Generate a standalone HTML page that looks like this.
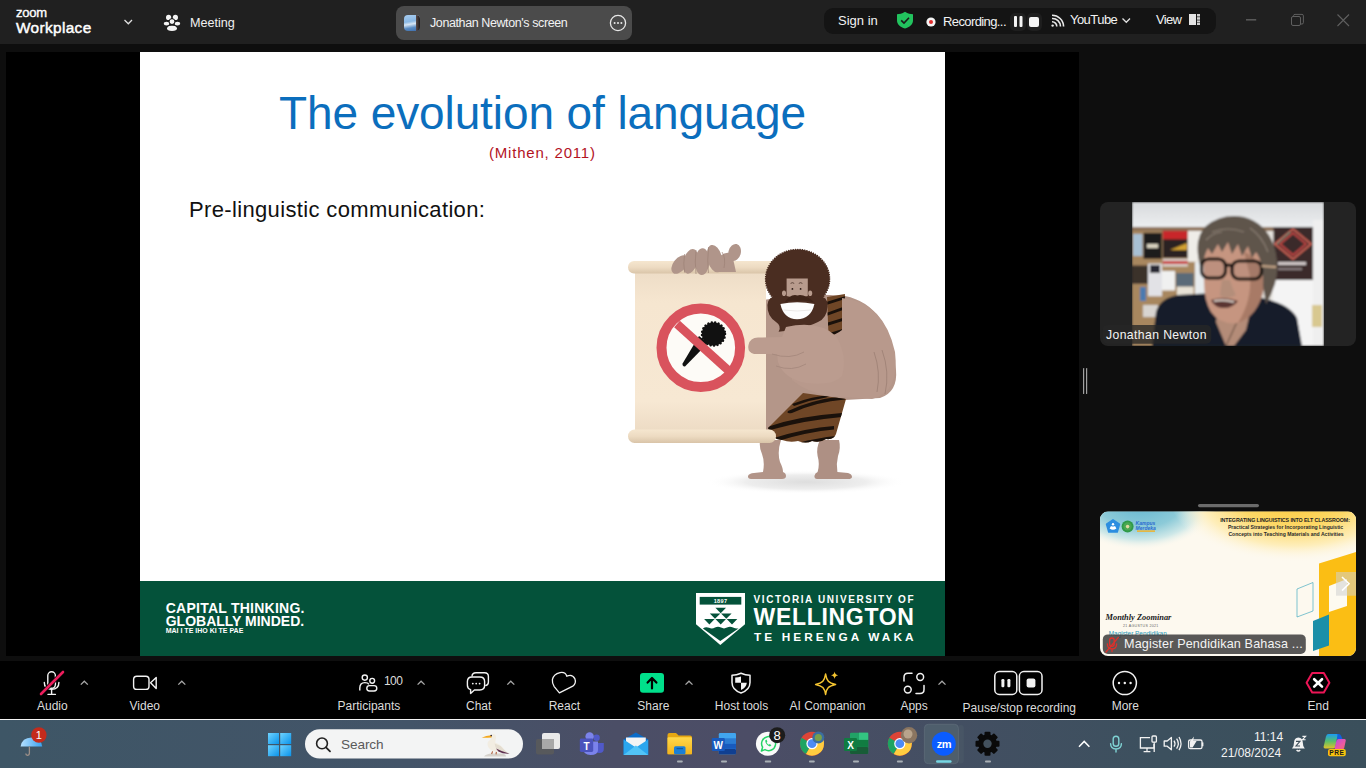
<!DOCTYPE html>
<html><head><meta charset="utf-8">
<style>
*{margin:0;padding:0;box-sizing:border-box}
html,body{width:1366px;height:768px;overflow:hidden;background:#0e0e0e;font-family:"Liberation Sans",sans-serif;color:#fff}
.a{position:absolute}
.t{position:absolute;white-space:nowrap;line-height:1}
svg{position:absolute;overflow:visible}
#title{left:0;top:0;width:1366px;height:44px;background:#202020}
#video{left:6px;top:52px;width:1073px;height:604px;background:#000}
#slide{left:140px;top:52px;width:805px;height:604px;background:#fff;overflow:hidden}
#toolbar{left:0;top:661px;width:1366px;height:58px;background:#000}
#taskbar{left:0;top:719px;width:1366px;height:49px;background:linear-gradient(90deg,#3e5666 0%,#435468 30%,#4b4e66 45%,#4c4d66 55%,#434f62 70%,#3c505e 85%,#3a4f5b 100%);border-top:1px solid #f4f4f4}
.lbl{font-size:12px;color:#dcdcdc}
.chev{stroke:#a8a8a8;stroke-width:1.3;fill:none}
</style></head><body>
<!-- TITLE BAR -->
<div id="title" class="a">
  <div class="t" style="left:16px;top:6px;font-size:13px;letter-spacing:-0.2px;-webkit-text-stroke:0.35px #fff">zoom</div>
  <div class="t" style="left:16px;top:20px;font-size:15.4px;letter-spacing:0.35px;-webkit-text-stroke:0.45px #fff">Workplace</div>
  <svg style="left:0;top:0" width="1366" height="44">
    <path d="M124.5 20 L128.3 23.8 L132 20" stroke="#e0e0e0" stroke-width="1.3" fill="none"/>
    <!-- meeting icon -->
    <g fill="#f4f4f4">
      <circle cx="168.6" cy="17.4" r="2.6"/><circle cx="175.4" cy="17.4" r="2.6"/>
      <circle cx="172" cy="21.6" r="2.5"/>
      <ellipse cx="166.6" cy="23.6" rx="2.8" ry="1.9"/><ellipse cx="177.4" cy="23.6" rx="2.8" ry="1.9"/>
      <ellipse cx="172" cy="28.2" rx="5" ry="2.7"/>
    </g>
    <g stroke="#202020" stroke-width="1" fill="none">
      <circle cx="172" cy="21.6" r="3"/>
      <path d="M166.5 28.2 a5.5 3.2 0 0 1 11 0"/>
    </g>
  </svg>
  <div class="t" style="left:190px;top:17px;font-size:12.6px;color:#f0f0f0">Meeting</div>
  <!-- share pill -->
  <div class="a" style="left:396px;top:6px;width:236px;height:34px;border-radius:8px;background:#4b4b4b"></div>
  <div class="a" style="left:404px;top:15px;width:16px;height:16px;border-radius:4px;background:linear-gradient(170deg,#a8cdf0 0%,#8ab8e4 40%,#d8e6f4 55%,#5a8cc4 75%,#3a6aa8 100%)"></div>
  <div class="a" style="left:416px;top:15px;width:4px;height:16px;border-radius:0 4px 4px 0;background:linear-gradient(90deg,#5a4a48,#1e1a1a)"></div>
  <div class="t" style="left:430px;top:17px;font-size:12.5px;letter-spacing:-0.4px;color:#f2f2f2">Jonathan Newton's screen</div>
  <svg style="left:0;top:0" width="1366" height="44">
    <circle cx="618" cy="23" r="7.6" stroke="#e8e8e8" stroke-width="1.3" fill="none"/>
    <circle cx="614.6" cy="23" r="1" fill="#e8e8e8"/><circle cx="618" cy="23" r="1" fill="#e8e8e8"/><circle cx="621.4" cy="23" r="1" fill="#e8e8e8"/>
  </svg>
  <!-- right pill -->
  <div class="a" style="left:824px;top:8px;width:392px;height:26px;border-radius:9px;background:#141414"></div>
  <div class="t" style="left:838px;top:14px;font-size:13px;color:#f2f2f2">Sign in</div>
  <svg style="left:0;top:0" width="1366" height="44">
    <path d="M905 11.8 C908 13.6 910.5 14.2 913 14.2 L913 20.5 C913 24.5 909.5 27.3 905 28.6 C900.5 27.3 897 24.5 897 20.5 L897 14.2 C899.5 14.2 902 13.6 905 11.8Z" fill="#22c35e"/>
    <path d="M901.2 20.3 L904 23 L909 17.8" stroke="#1a1a1a" stroke-width="1.6" fill="none"/>
    <circle cx="931" cy="22" r="4.6" fill="#f4f4f4"/><circle cx="931" cy="22" r="2" fill="#e02b2b"/>
    <rect x="1010" y="13" width="16" height="18" rx="5" fill="#1e1e1e"/>
    <rect x="1027" y="13" width="15" height="18" rx="5" fill="#1e1e1e"/>
    <rect x="1014" y="16" width="3" height="11" rx="1" fill="#f4f4f4"/><rect x="1019.5" y="16" width="3" height="11" rx="1" fill="#f4f4f4"/>
    <rect x="1029" y="17" width="10" height="10" rx="2" fill="#f4f4f4"/>
    <!-- rss -->
    <g fill="none" stroke="#e8e8e8" stroke-width="1.6">
      <path d="M1052 18.5 A8 8 0 0 1 1060.5 26.5"/>
      <path d="M1052 15.2 A11.5 11.5 0 0 1 1063.6 26.5"/>
      <path d="M1052 21.8 A4.6 4.6 0 0 1 1056.8 26.5"/>
    </g>
    <circle cx="1052.6" cy="25.6" r="1.2" fill="#e8e8e8"/>
    <path d="M1122.5 18.5 L1126.3 22.3 L1130 18.5" stroke="#e0e0e0" stroke-width="1.3" fill="none"/>
    <!-- view icon -->
    <rect x="1189" y="14" width="7" height="11" fill="#e4e4e4"/>
    <g fill="#cfcfcf"><rect x="1197" y="14" width="3" height="2.5"/><rect x="1197" y="17.2" width="3" height="2.5"/><rect x="1197" y="20.4" width="3" height="2.1"/><rect x="1197" y="23" width="3" height="2"/></g>
    <!-- window controls -->
    <path d="M1246 19.8 H1256.2" stroke="#5c5c5c" stroke-width="1.5"/>
    <rect x="1291.5" y="16.5" width="9" height="9" rx="1.5" stroke="#5f5f5f" stroke-width="1" fill="none"/>
    <path d="M1293.6 16.5 V15.6 Q1293.6 14.4 1295 14.4 H1302 Q1303.4 14.4 1303.4 15.8 V22.6 Q1303.4 24 1302 24 H1300.6" stroke="#5f5f5f" stroke-width="1" fill="none"/>
    <path d="M1337.5 14.5 L1349 26 M1349 14.5 L1337.5 26" stroke="#5f5f5f" stroke-width="1.1"/>
  </svg>
  <div class="t" style="left:943px;top:15px;font-size:13px;letter-spacing:-0.6px;color:#f2f2f2">Recording...</div>
  <div class="t" style="left:1070px;top:13px;font-size:13px;letter-spacing:-0.55px;color:#f2f2f2">YouTube</div>
  <div class="t" style="left:1156px;top:13px;font-size:13px;letter-spacing:-0.7px;color:#f2f2f2">View</div>
</div>

<div id="video" class="a"></div>
<div id="slide" class="a">
  <div class="t" id="ttl" style="left:139px;top:38px;font-size:46px;letter-spacing:-0.1px;color:#0b6ebd">The evolution of language</div>
  <div class="t" style="left:349px;top:92.5px;font-size:15px;letter-spacing:0.8px;color:#b3141f">(Mithen, 2011)</div>
  <div class="t" style="left:49px;top:147px;font-size:22px;letter-spacing:0.35px;color:#111">Pre-linguistic communication:</div>
<svg style="left:-140px;top:-52px" width="1366" height="768">
    <defs>
      <radialGradient id="shadow" cx="0.5" cy="0.5" r="0.5"><stop offset="0" stop-color="#cfcfcf"/><stop offset="0.6" stop-color="#e6e6e6"/><stop offset="1" stop-color="#ffffff" stop-opacity="0"/></radialGradient>
      <linearGradient id="scroll" x1="0" y1="0" x2="0" y2="1"><stop offset="0" stop-color="#eddcc6"/><stop offset="0.2" stop-color="#f6e6d0"/><stop offset="0.8" stop-color="#f7e8d3"/><stop offset="1" stop-color="#ecdac3"/></linearGradient>
      <linearGradient id="roll" x1="0" y1="0" x2="0" y2="1"><stop offset="0" stop-color="#f5e6cf"/><stop offset="0.5" stop-color="#eddbc2"/><stop offset="1" stop-color="#d9c4a8"/></linearGradient>
      <linearGradient id="skin" x1="0" y1="0" x2="1" y2="1"><stop offset="0" stop-color="#bfa194"/><stop offset="1" stop-color="#ad8f83"/></linearGradient>
      <pattern id="tiger" width="14" height="14" patternUnits="userSpaceOnUse" patternTransform="rotate(-18)">
        <rect width="14" height="14" fill="#6e4527"/><rect y="4" width="14" height="3.2" fill="#1c120c"/>
      </pattern>
    </defs>
    <!-- shadow -->
    <ellipse cx="806" cy="482" rx="100" ry="12" fill="url(#shadow)" opacity="0.7"/>
    <!-- legs -->
    <path d="M760 440 L781 440 Q777 452 780 462 Q783 468 783 472 Q786 473 786 476 Q786 479 782 479 L751 479 Q747.6 479 748 476 Q749 473.4 754 473 L763 472 Q765 462 762 454 Q759 448 760 440Z" fill="#b29488"/>
    <path d="M820 440 L839 440 Q841 448 838 456 Q836 464 837.4 472 L848 473 Q852 474 852 477 Q851.6 479 848 479 L817 479 Q814.4 479 814.4 476 Q815 473 817.6 472 Q820 464 817.6 456 Q816 448 820 440Z" fill="#ae9084"/>
    <!-- torso -->
    <path d="M764 300 Q800 292 845 296 Q890 305 896 370 Q898 392 880 398 L845 400 L803 394 L790 430 L764 432Z" fill="#b49689"/>
    <!-- loincloth -->
    <clipPath id="lc"><path d="M768 428 L803 393 L846 399 L836 434 Q834 440 826 439 Q820 443 812 441 Q806 444 798 441 Q790 443 782 440 Q772 440 768 428Z"/></clipPath>
    <path d="M768 428 L803 393 L846 399 L836 434 Q834 440 826 439 Q820 443 812 441 Q806 444 798 441 Q790 443 782 440 Q772 440 768 428Z" fill="#6f4626"/>
    <g clip-path="url(#lc)" fill="#1a110b">
      <path d="M788 411 Q812 400 840 396.6 L846 396 L845 399.6 Q816 402 792 413 Q786 414 788 411Z"/>
      <path d="M792 404 Q812 396 832 395 L826 397.6 Q810 400 794 406Z"/>
      <path d="M766 427.4 Q798 416 842 413 L842 417 Q806 420 770 430Z"/>
      <path d="M774 438 Q806 428 834 426 L834 429.6 Q808 432 778 441Z"/>
      <path d="M794 444 Q816 438 836 436 L836 440 Q818 442 798 446Z"/>
    </g>
    <!-- strap -->
    <clipPath id="st"><path d="M827 297 L845 294 L843 346 L829 348Z"/></clipPath>
    <path d="M827 297 L845 294 L843 346 L829 348Z" fill="#6f4626"/>
    <g clip-path="url(#st)" fill="#1a110b">
      <path d="M826 302 L846 296 L846 298.6 L826 305Z"/>
      <path d="M826 313 L846 306 L846 309 L826 316Z"/>
      <path d="M826 323 L846 317 L846 320 L826 326.4Z"/>
      <path d="M826 334 L846 328 L846 331 L826 337Z"/>
      <path d="M826 344 L846 338 L846 341 L826 347Z"/>
    </g>
    <!-- scroll -->
    <rect x="635" y="270" width="131" height="164" fill="url(#scroll)"/>
    <rect x="628" y="261" width="148" height="12.6" rx="6" fill="url(#roll)"/>
    <rect x="628" y="429.5" width="148" height="13.5" rx="6.5" fill="url(#roll)"/>
    <!-- afro -->
    <ellipse cx="797.6" cy="279" rx="32" ry="29.5" fill="#4a2d21" stroke="#4a2d21" stroke-width="1.6" stroke-dasharray="0.1 2.2" stroke-linecap="round"/>
    <!-- beard -->
    <path d="M767.4 305 Q768 296 778 296 L818 296 Q828 296 827.6 306 Q827 318 818 322 Q808 327 796 329 Q786 331 778.6 331.8 Q782 326 776 322 Q767 316 767.4 305Z" fill="#4a2d21"/>
    <!-- face -->
    <path d="M786.6 278.4 H807.8 V296 Q797 299 786.6 296Z" fill="#b89b8d"/>
    <ellipse cx="784" cy="293.2" rx="2" ry="2.8" fill="#b89b8d"/><ellipse cx="810.2" cy="293.2" rx="2" ry="2.8" fill="#b89b8d"/>
    <path d="M790.6 283.4 q1.8 -1.4 3.6 0 M798.8 283.4 q1.8 -1.4 3.6 0" stroke="#3a241b" stroke-width="0.7" fill="none"/>
    <circle cx="792.4" cy="288.9" r="0.9" fill="#2a1a14"/><circle cx="800.6" cy="288.9" r="0.9" fill="#2a1a14"/>
    <path d="M784.6 302.6 Q790 293.6 797.4 295.4 Q805 293.6 814.4 302.6 Q805 299.6 797.4 301 Q790 299.6 784.6 302.6Z" fill="#3e2419"/>
    <!-- smile -->
    <path d="M780.4 304 Q797 300.4 814.4 304 Q811 319.2 797 319.2 Q783.6 319.2 780.4 304Z" fill="#fdfdfd"/>
    <path d="M783.6 310 Q797 312 811 310" stroke="#d8d4d0" stroke-width="0.5" fill="none"/>
    <!-- hand on top -->
    <g fill="#b0958a">
      <path d="M718 258 Q726 250 732 254 L736 272 L716 272Z"/>
      <ellipse cx="734.6" cy="252.4" rx="6.2" ry="8.6" transform="rotate(14 734.6 252.4)"/>
      <ellipse cx="679.6" cy="264.6" rx="6.4" ry="10.6" transform="rotate(38 679.6 264.6)"/>
      <ellipse cx="690.4" cy="261.4" rx="7" ry="12.6" transform="rotate(16 690.4 261.4)"/>
      <ellipse cx="702.2" cy="261.6" rx="7.2" ry="13.4" transform="rotate(2 702.2 261.6)"/>
      <ellipse cx="714.8" cy="258.6" rx="7.4" ry="14" transform="rotate(-14 714.8 258.6)"/>
    </g>
    <g fill="none" stroke="#9c8176" stroke-width="0.7">
      <path d="M684.6 254 Q683 264 684.6 272.6"/><path d="M696 250 Q694.6 262 696 274"/><path d="M708.6 247 Q707 260 708.4 273"/><path d="M722 252 Q726 258 724 268"/>
    </g>
    <!-- prohibition -->
    <circle cx="700.8" cy="347.8" r="39.3" stroke="#d9535d" stroke-width="10" fill="#fdfbf7"/>
    <path d="M682.6 363.6 Q682 366.6 685 366.4 L708 343 L699 336 Z" fill="#111"/>
    <circle cx="713.5" cy="334" r="11.6" fill="#111" stroke="#111" stroke-width="2.4" stroke-dasharray="0.1 3.4" stroke-linecap="round"/>
    <path d="M677 324 L729 371" stroke="#d9535d" stroke-width="8.5"/>
    <!-- arm / forearm -->
    <path d="M842 298 Q884 302 895 352 Q900 392 872 399 L830 396 Q806 392 792 380 L790 345 Q830 340 842 330 Z" fill="#b8998c"/>
    <path d="M874 352 Q881 372 877 392 M882 350 Q890 372 885 394" stroke="#9c7f74" stroke-width="0.8" fill="none"/>
    <!-- fist -->
    <path d="M786 327 Q818 320 836 336 Q848 356 842 376 Q834 386 806 383 Q784 379 778 362 L777 354 L754 354 Q747 352 748.5 345 Q750 337.5 758 337.5 L782 337Z" fill="#bb9c8f"/>
    <path d="M772 354 Q790 360 804 352 M776 366 Q792 372 806 364" stroke="#a3867b" stroke-width="0.8" fill="none"/>
    
  </svg>
  <div class="a" style="left:0;top:529px;width:805px;height:75px;background:#04523a"></div>
  <div class="t" style="left:25.7px;top:549px;font-size:14px;font-weight:bold;letter-spacing:0.25px;color:#fff">CAPITAL THINKING.</div>
  <div class="t" style="left:25.7px;top:561.5px;font-size:14px;font-weight:bold;color:#fff">GLOBALLY MINDED.</div>
  <div class="t" style="left:25.7px;top:575px;font-size:7px;font-weight:bold;color:#fff">MAI I TE IHO KI TE PAE</div>
  <svg style="left:-140px;top:-52px" width="1366" height="768">
    <path d="M696 593 H745 V624.3 L720.3 645 L696 624.3Z" fill="#fff"/>
    <rect x="699.7" y="596.9" width="41.6" height="7.7" fill="#04523a"/>
    <text x="720.5" y="603" font-family="Liberation Sans" font-size="5.6" font-weight="bold" fill="#fff" text-anchor="middle" letter-spacing="0.3">1897</text>
    <g fill="#04523a">
      <path d="M715.4 607.8 H726 L720.7 613.2Z"/>
      <path d="M709.8 613.4 H720.4 L715 618.8Z M721 613.4 H731.6 L726.3 618.8Z"/>
      <path d="M704.1 619 H714.7 L709.4 624.4Z M715.4 619 H726 L720.7 624.4Z M726.7 619 H737.3 L732 624.4Z"/>
      <path d="M702.9 628.4 Q706 626.2 709 627.8 Q712 629.2 715 627.6 Q718 626 721 627.6 Q724 629.2 727 627.6 Q730 626 733 627.6 Q736 629 738.5 628.4 L720.3 641Z"/>
    </g>
  </svg>
  <div class="t" style="left:613.5px;top:542.5px;font-size:10px;font-weight:bold;letter-spacing:1.6px;color:#fff">VICTORIA UNIVERSITY OF</div>
  <div class="t" style="left:613.5px;top:554px;font-size:23px;font-weight:bold;letter-spacing:0.7px;color:#fff">WELLINGTON</div>
  <div class="t" style="left:614px;top:579.5px;font-size:11.8px;font-weight:bold;letter-spacing:3.1px;color:#fff">TE HERENGA WAKA</div>
</div>

<!-- RIGHT PANEL -->
<svg style="left:0;top:0" width="1366" height="768">
  <defs>
    <clipPath id="clipv"><rect x="1132" y="202" width="192" height="144"/></clipPath>
    <clipPath id="clipt2"><rect x="1100" y="511.6" width="256" height="144.4" rx="8"/></clipPath>
    <filter id="soft" x="-5%" y="-5%" width="110%" height="110%"><feGaussianBlur stdDeviation="0.9"/></filter>
    <radialGradient id="bblob" cx="0.5" cy="0.5" r="0.5"><stop offset="0" stop-color="#5fb4cf"/><stop offset="0.55" stop-color="#8ccad8"/><stop offset="0.8" stop-color="#cfe8e8"/><stop offset="1" stop-color="#fdf9ef" stop-opacity="0"/></radialGradient>
    <radialGradient id="yblob" cx="0.5" cy="0.5" r="0.5"><stop offset="0" stop-color="#fcc93a"/><stop offset="0.45" stop-color="#fdd867"/><stop offset="0.75" stop-color="#feeebb"/><stop offset="1" stop-color="#fdf9ef" stop-opacity="0"/></radialGradient>
    <linearGradient id="ceil" x1="0" y1="0" x2="0" y2="1"><stop offset="0" stop-color="#d8dadc"/><stop offset="1" stop-color="#eceef0"/></linearGradient>
  </defs>
  <!-- resize handle -->
  <rect x="1083" y="368" width="1.2" height="26" rx="0.6" fill="#a0a0a0"/>
  <rect x="1086" y="368" width="1.2" height="26" rx="0.6" fill="#a0a0a0"/>
  <!-- tile 1 -->
  <rect x="1100" y="202" width="256" height="144" rx="8" fill="#232323"/>
  <g clip-path="url(#clipv)"><g filter="url(#soft)">
    <rect x="1132" y="202" width="192" height="144" fill="#e6e3de"/>
    <rect x="1132" y="202" width="192" height="26" fill="url(#ceil)"/>
    <rect x="1132" y="231" width="30" height="31" fill="#ebe8e2"/>
    <rect x="1132" y="227" width="186" height="4" fill="#8e7258"/>
    <rect x="1132" y="231" width="66" height="115" fill="#a8875f"/>
    <rect x="1133" y="234" width="9.5" height="22" fill="#a8c0d4"/>
    <rect x="1143.5" y="232.8" width="18.3" height="26" fill="#1c1c1c"/>
    <rect x="1147" y="244" width="11" height="4" fill="#d8d2c0"/>
    <rect x="1162.8" y="230.8" width="25" height="27" fill="#2a2420"/>
    <rect x="1162.8" y="230.8" width="25" height="8.5" fill="#c8282a"/>
    <path d="M1170 250 L1187 243 L1187 250Z" fill="#d2a030"/>
    <rect x="1162.8" y="258.8" width="25" height="7.7" fill="#d9d0cc"/>
    <rect x="1162.8" y="261" width="25" height="3" fill="#c83030"/>
    <rect x="1187.8" y="230.8" width="19" height="31" fill="#efede8"/>
    <rect x="1132" y="265.5" width="16" height="18.3" fill="#3a302c"/>
    <rect x="1148" y="263.6" width="14" height="32.7" fill="#e2e2e6"/>
    <rect x="1150" y="265" width="10" height="8" fill="#2c2c34"/>
    <rect x="1162" y="271" width="13" height="19.5" fill="#f0f0f0"/>
    <rect x="1176" y="273" width="17.6" height="13.7" fill="#5a6a78"/>
    <rect x="1177" y="286.7" width="16.6" height="9.6" fill="#e8e2d6"/>
    <rect x="1140" y="287" width="6" height="14" fill="#4c7ab0"/>
    <rect x="1143" y="305" width="15" height="12" fill="#d8d4d0"/>
    <rect x="1195" y="262" width="10" height="34" fill="#e8ecee"/>
    <rect x="1273.5" y="227" width="39.5" height="53" fill="#3b2b2c"/>
    <path d="M1293 229 L1311 244 L1293 259 L1275 244Z" fill="none" stroke="#e06a5a" stroke-width="1.6"/>
    <path d="M1293 233 L1306 244 L1293 255 L1280 244Z" fill="none" stroke="#d84c48" stroke-width="1.4"/>
    <path d="M1277 244 L1290 232" stroke="#3ca890" stroke-width="1"/>
    <rect x="1278" y="262" width="28" height="3" fill="#d0c8c8"/>
    <rect x="1278" y="268" width="24" height="2" fill="#8a7f80"/>
    <rect x="1313" y="220" width="11" height="126" fill="#efefef"/>
    <rect x="1272.6" y="280" width="40.4" height="66" fill="#f4f4f4"/>
    <rect x="1312" y="305" width="10" height="22" fill="#d8c890"/>
    <!-- man -->
    <path d="M1152 346 L1156 312 Q1160 298 1178 295 L1214 293 L1262 298 Q1290 304 1297 318 L1302 346Z" fill="#171c29"/>
    <path d="M1218 306 L1252 304 L1246 330 L1234 346 L1226 346 L1216 322Z" fill="#b48c78"/>
    <path d="M1226 346 L1236 324 L1250 310" stroke="#3a2a20" stroke-width="0.8" fill="none"/>
    <path d="M1203 244 Q1206 236 1230 236 Q1258 238 1262 256 L1264 288 Q1258 316 1238 323 Q1220 325 1211 312 Q1204 300 1204 282Z" fill="#c69580"/>
    <path d="M1244 252 Q1262 258 1264 288 Q1258 316 1238 323 Q1252 300 1250 276Z" fill="#a87a66"/>
    <path d="M1200 266 Q1193 238 1206 226 Q1222 213 1244 217 Q1266 223 1274 246 Q1280 266 1275 284 Q1271 296 1266 304 L1263 286 Q1264 262 1256 252 L1252 258 L1248 246 L1242 256 L1238 244 L1232 254 L1228 242 L1222 252 L1218 244 L1212 254 L1208 248 Q1203 256 1203 270Z" fill="#5f554c"/>
    <path d="M1212 232 Q1228 226 1244 232 M1250 228 Q1262 236 1268 252 M1206 240 Q1214 232 1222 232" stroke="#8a7e72" stroke-width="1.2" fill="none"/>
    <g fill="none" stroke="#0e0a08" stroke-width="3.2">
      <rect x="1201.5" y="259" width="24" height="19" rx="7"/>
      <rect x="1232" y="261" width="29.5" height="18" rx="7"/>
      <path d="M1225.5 266 Q1229 264 1232 266"/>
    </g>
    <path d="M1261.5 266 L1276 267" stroke="#c9a88a" stroke-width="2"/>
    <rect x="1203" y="260.4" width="21" height="16" rx="6" fill="#8d7a72" fill-opacity="0.15"/>
    <rect x="1233.5" y="262.4" width="26.5" height="15.2" rx="6" fill="#8d7a72" fill-opacity="0.15"/>
    <path d="M1222 280 Q1220 292 1220 296 Q1228 300 1236 295 Q1232 288 1230 280Z" fill="#b48e7a"/>
    <path d="M1211 300 Q1224 296 1238 301 Q1232 309 1222 308 Q1214 307 1211 300Z" fill="#5a3630"/>
    <path d="M1214 301 Q1224 299 1234 302" stroke="#ece4dc" stroke-width="1.6" fill="none"/>
  </g></g>
  <rect x="1102.8" y="325" width="108.5" height="18.8" rx="5" fill="#262626" fill-opacity="0.78"/>
  <!-- separator -->
  <rect x="1198" y="504" width="61" height="3.2" rx="1.6" fill="#6b6b6b"/>
  <!-- tile 2 -->
  <g clip-path="url(#clipt2)">
    <rect x="1100" y="511.6" width="256" height="144.4" fill="#fdf9ef"/>
    <ellipse cx="1140" cy="500" rx="78" ry="50" fill="url(#bblob)"/>
    <ellipse cx="1295" cy="498" rx="125" ry="64" fill="url(#yblob)"/>
    <path d="M1319 563.5 L1356 552 V656 H1319Z" fill="#fbbe14"/>
    <path d="M1329 586 L1347 579 V606 L1329 612Z" fill="#fdfaf0"/>
    <path d="M1313 621 L1329 614.5 V645.5 L1313 651Z" fill="#1b8fa8"/>
    <path d="M1297 589 L1313 582.5 V611 L1297 617Z" fill="none" stroke="#2aa0b8" stroke-width="0.6"/>
    <rect x="1336" y="572" width="20" height="23.7" fill="#d0d0d0" fill-opacity="0.55"/>
    <path d="M1342 577 L1349 583.8 L1342 590.6" stroke="#fff" stroke-width="1.6" fill="none"/>
    <path d="M1113 519.8 L1119.4 524.2 L1117.2 532 L1108.8 532 L1106.6 524.2Z" fill="#2c8ee0" stroke="#2c8ee0" stroke-width="1.6" stroke-linejoin="round"/>
    <path d="M1109.6 528.6 Q1113 531 1116.4 528.6 L1115 526 Q1113 527 1111 526Z" fill="#fff"/><circle cx="1113" cy="524.2" r="1.2" fill="#fff"/>
    <circle cx="1127.6" cy="526.4" r="6" fill="#2f9a48"/><circle cx="1127.6" cy="526.4" r="4.2" fill="#4aa852"/><circle cx="1127.6" cy="526.6" r="1.8" fill="#e0d8a0"/>
    <text x="1135.6" y="524.8" font-family="Liberation Sans" font-size="5" font-style="italic" font-weight="bold" fill="#2a6ad0">Kampus</text>
    <text x="1135.6" y="529.6" font-family="Liberation Sans" font-size="5" font-style="italic" font-weight="bold" fill="#2a6ad0">Merdeka</text>
    <rect x="1137" y="530.4" width="18" height="1.4" fill="#f4b020"/>
    <text x="1285" y="522.4" font-family="Liberation Sans" font-size="5.3" font-weight="bold" fill="#222" text-anchor="middle" letter-spacing="-0.1">INTEGRATING LINGUISTICS INTO ELT CLASSROOM:</text>
    <text x="1285.5" y="529.2" font-family="Liberation Sans" font-size="5.1" font-weight="bold" fill="#2a2a2a" text-anchor="middle">Practical Strategies for Incorporating Linguistic</text>
    <text x="1286" y="536.4" font-family="Liberation Sans" font-size="5.1" font-weight="bold" fill="#2a2a2a" text-anchor="middle">Concepts into Teaching Materials and Activities</text>
    <text x="1105.5" y="619.6" font-family="Liberation Serif" font-size="8.4" font-style="italic" font-weight="bold" fill="#1a1a1a">Monthly Zoominar</text>
    <text x="1123" y="627" font-family="Liberation Sans" font-size="3.6" fill="#666" letter-spacing="0.3">21 AGUSTUS 2021</text>
    <text x="1108.8" y="635.6" font-family="Liberation Sans" font-size="6.4" fill="#2a9ab8">Magister Pendidikan</text>
  </g>
  <rect x="1102.8" y="634.4" width="203" height="19.5" rx="5" fill="#3c3c3c" fill-opacity="0.85"/>
  <g stroke="#e0302a" stroke-width="1.3" fill="none" stroke-linecap="round">
    <rect x="1109.6" y="638" width="4.6" height="8.4" rx="2.3"/>
    <path d="M1107.4 644 Q1107.4 649 1112 649 Q1116.6 649 1116.6 644 M1112 649 V651.6"/>
    <path d="M1106 652 L1118.4 637.4"/>
  </g>
</svg>
<div class="t" style="left:1106px;top:329px;font-size:12.2px;letter-spacing:0.4px;color:#f4f4f4">Jonathan Newton</div>
<div class="t" style="left:1124px;top:638px;font-size:12.6px;letter-spacing:0.15px;color:#f4f4f4">Magister Pendidikan Bahasa ...</div>
<div id="toolbar" class="a">
  <svg style="left:0;top:0" width="1366" height="57">
    <!-- audio muted mic -->
    <g stroke="#f2f2f2" stroke-width="1.4" fill="none" stroke-linecap="round">
      <rect x="47.8" y="10.8" width="7.6" height="16.5" rx="3.8"/>
      <path d="M44.3 21.5 Q44.3 28.2 51.6 28.2 Q58.9 28.2 58.9 21.5"/>
      <path d="M51.6 28.2 V33.2 M48 33.4 H55.4"/>
    </g>
    <path d="M41 33 L63 11" stroke="#000" stroke-width="4.2"/>
    <path d="M41 33 L63 11" stroke="#eb1d5c" stroke-width="2.6" stroke-linecap="round"/>
    <path d="M80.8 23.6 L84.3 20.2 L87.8 23.6" class="chev"/>
    <!-- video -->
    <rect x="133.6" y="15.2" width="15.4" height="13.2" rx="3.2" stroke="#f2f2f2" stroke-width="1.4" fill="none"/>
    <path d="M150.6 21.8 L156.2 16.6 V27.6 Z" stroke="#f2f2f2" stroke-width="1.4" fill="none" stroke-linejoin="round"/>
    <path d="M178.3 23.6 L181.8 20.2 L185.3 23.6" class="chev"/>
    <!-- participants -->
    <g stroke="#f2f2f2" stroke-width="1.4" fill="none">
      <circle cx="364.8" cy="16.6" r="2.6"/>
      <path d="M359.8 29.6 V27 Q359.8 21.6 364.8 21.6 Q368 21.6 369 23.3"/>
      <circle cx="372.2" cy="19.8" r="2.4"/>
      <rect x="366.8" y="24.6" width="10" height="5.4" rx="2.7"/>
    </g>
    <path d="M417.6 23.6 L421.1 20.2 L424.6 23.6" class="chev"/>
    <!-- chat -->
    <g stroke="#f2f2f2" stroke-width="1.4" fill="none" stroke-linejoin="round">
      <path d="M472 15.6 Q472 11.8 476 11.8 H484.6 Q488.4 11.8 488.4 15.6 V21.2 Q488.4 24.2 485.2 24.6"/>
      <path d="M467.4 20.6 Q467.4 16 472 16 H479.8 Q484.6 16 484.6 20.6 V24.6 Q484.6 29 479.8 29 H474.4 L470.6 32.4 V28.6 Q467.4 27.6 467.4 24.2 Z" fill="#000"/>
    </g>
    <g fill="#f2f2f2"><circle cx="472.8" cy="22.6" r="0.9"/><circle cx="476.2" cy="22.6" r="0.9"/><circle cx="479.6" cy="22.6" r="0.9"/></g>
    <path d="M507.3 23.6 L510.8 20.2 L514.3 23.6" class="chev"/>
    <!-- react heart -->
    <path d="M559.4 31.8 L572.8 25.2 Q576.6 22.4 574.8 17.6 Q572.2 12.6 566.8 15.2 Q565.4 10.6 560 11.6 Q553.4 13.2 552.4 18.6 Q552 22.4 554.2 25.6 Z" stroke="#f2f2f2" stroke-width="1.3" fill="none" stroke-linejoin="round"/>
    <!-- share -->
    <rect x="640" y="12" width="24" height="19.8" rx="3" fill="#00e08b"/>
    <path d="M652 27.5 V17.5 M647.6 21.6 L652 17 L656.4 21.6" stroke="#000" stroke-width="2.2" fill="none" stroke-linecap="round" stroke-linejoin="round"/>
    <path d="M685.5 23.6 L689 20.2 L692.5 23.6" class="chev"/>
    <!-- host tools shield -->
    <path d="M741 12.2 C744.5 13.8 747.6 14.2 750 14.2 V21.6 C750 26.4 746.4 30.2 741 32 C735.6 30.2 732 26.4 732 21.6 V14.2 C734.4 14.2 737.5 13.8 741 12.2Z" stroke="#f2f2f2" stroke-width="1.5" fill="none" stroke-linejoin="round"/>
    <path d="M741 15.4 V21.8 H735.2 V16.4 C737.4 16.3 739.2 16 741 15.4Z M741 21.8 H746.8 C746.6 25.2 744.4 27.6 741 29 Z" fill="#f2f2f2"/>
    <!-- AI star -->
    <path d="M825.6 13 C826.6 19.6 828.6 22 835.6 23.4 C828.6 24.8 826.6 27.2 825.6 33.4 C824.6 27.2 822.6 24.8 815.6 23.4 C822.6 22 824.6 19.6 825.6 13Z" stroke="#f4c430" stroke-width="1.5" fill="none" stroke-linejoin="round"/>
    <path d="M834.6 10.6 C835 13 835.8 13.8 838.2 14.3 C835.8 14.8 835 15.6 834.6 18 C834.2 15.6 833.4 14.8 831 14.3 C833.4 13.8 834.2 13 834.6 10.6Z" fill="#f4c430"/>
    <!-- apps -->
    <g stroke="#f2f2f2" stroke-width="1.5" fill="none" stroke-linecap="round">
      <path d="M904 20 V16.2 Q904 12.2 908 12.2 H912"/>
      <path d="M916 32.6 H920 Q924 32.6 924 28.6 V24.6"/>
      <circle cx="920.2" cy="16" r="3.4"/>
      <circle cx="907.8" cy="28.6" r="3.4"/>
    </g>
    <path d="M938.5 23.6 L942 20.2 L945.5 23.6" class="chev"/>
    <!-- pause/stop -->
    <rect x="994.8" y="10.6" width="22" height="22.8" rx="4.5" stroke="#f2f2f2" stroke-width="1.5" fill="none"/>
    <rect x="1019.4" y="10.6" width="22.6" height="22.8" rx="4.5" stroke="#f2f2f2" stroke-width="1.5" fill="none"/>
    <rect x="1001.4" y="18" width="3" height="8.2" rx="1.2" fill="#f2f2f2"/>
    <rect x="1007.4" y="18" width="3" height="8.2" rx="1.2" fill="#f2f2f2"/>
    <rect x="1026.6" y="17.6" width="8.8" height="8.8" rx="2" fill="#f2f2f2"/>
    <!-- more -->
    <circle cx="1124.8" cy="22" r="11.6" stroke="#f2f2f2" stroke-width="1.5" fill="none"/>
    <g fill="#f2f2f2"><circle cx="1119" cy="22" r="1.2"/><circle cx="1124.8" cy="22" r="1.2"/><circle cx="1130.6" cy="22" r="1.2"/></g>
    <!-- end -->
    <path d="M1312.2 12 H1323.8 L1329.4 21.8 L1323.8 31.6 H1312.2 L1306.6 21.8 Z" stroke="#ec1556" stroke-width="2" fill="none" stroke-linejoin="round"/>
    <path d="M1314.2 18.2 L1322 25.6 M1322 18.2 L1314.2 25.6" stroke="#fff" stroke-width="2.6" stroke-linecap="round"/>
  </svg>
  <div class="t lbl" style="left:37px;top:39px">Audio</div>
  <div class="t lbl" style="left:129.5px;top:39px">Video</div>
  <div class="t" style="left:384px;top:14px;font-size:12px;letter-spacing:-0.6px;color:#dcdcdc">100</div>
  <div class="t lbl" style="left:337.6px;top:39px">Participants</div>
  <div class="t lbl" style="left:466px;top:39px">Chat</div>
  <div class="t lbl" style="left:548.7px;top:39px">React</div>
  <div class="t lbl" style="left:637.3px;top:39px">Share</div>
  <div class="t lbl" style="left:714.8px;top:39px">Host tools</div>
  <div class="t lbl" style="left:789.5px;top:39px">AI Companion</div>
  <div class="t lbl" style="left:900.4px;top:39px">Apps</div>
  <div class="t lbl" style="left:962.6px;top:41px">Pause/stop recording</div>
  <div class="t lbl" style="left:1111.7px;top:39px">More</div>
  <div class="t lbl" style="left:1307.6px;top:39px">End</div>
</div>
<div id="taskbar" class="a">
  <svg style="left:0;top:-720px" width="1366" height="768">
    <defs>
      <linearGradient id="win" x1="0" y1="0" x2="1" y2="1"><stop offset="0" stop-color="#6fd3ff"/><stop offset="1" stop-color="#0a93ea"/></linearGradient>
      <linearGradient id="umb" x1="0" y1="0" x2="1" y2="0"><stop offset="0" stop-color="#b5e0ff"/><stop offset="1" stop-color="#3aa2f0"/></linearGradient>
      <linearGradient id="fold" x1="0" y1="0" x2="0" y2="1"><stop offset="0" stop-color="#ffd84a"/><stop offset="1" stop-color="#f3b41d"/></linearGradient>
      <linearGradient id="cop" x1="0" y1="0" x2="1" y2="1"><stop offset="0" stop-color="#2fb8f0"/><stop offset="0.45" stop-color="#5ed37a"/><stop offset="0.7" stop-color="#e76fd4"/><stop offset="1" stop-color="#9a5cf0"/></linearGradient>
    </defs>
    <!-- weather umbrella -->
    <path d="M20.6 746.4 Q22 737.6 31.5 737.4 Q41 737.6 42.2 746.4 Z" fill="url(#umb)"/>
    <path d="M29.4 746.4 V753 Q29.4 755.4 27.4 755.4 Q25.8 755.4 25.8 753.6" stroke="#9c8f88" stroke-width="1.3" fill="none"/>
    <circle cx="38.9" cy="735" r="7.7" fill="#c42b1c"/>
    <text x="38.9" y="739.2" font-family="Liberation Sans" font-size="11" fill="#fff" text-anchor="middle">1</text>
    <!-- windows logo -->
    <rect x="268" y="733" width="11" height="11" fill="url(#win)"/><rect x="280.2" y="733" width="11" height="11" fill="url(#win)"/>
    <rect x="268" y="745.2" width="11" height="11" fill="url(#win)"/><rect x="280.2" y="745.2" width="11" height="11" fill="url(#win)"/>
    <!-- search pill -->
    <rect x="305" y="729.2" width="218" height="29.4" rx="14.7" fill="#f3f4f4"/>
    <circle cx="322" cy="743.4" r="5.4" stroke="#222" stroke-width="1.6" fill="none"/>
    <path d="M326 747.4 L330 751.4" stroke="#222" stroke-width="1.8" stroke-linecap="round"/>
    <!-- bird -->
    <path d="M484 756.5 Q486 753.6 492 753.4 L502 753.4 Q506 754 506 756.5Z" fill="#d6d2cc"/>
    <path d="M490 737 Q491.6 733.6 494.4 734.2 Q496.6 735.2 495.8 739.6 L495.2 742.6 Q499 743.6 502.6 747.4 Q505.2 750.4 506 752.4 Q500 751.8 496 751.6 Q490.6 751 488.2 747 Q486.6 743.6 488.6 741 Q490.6 740.2 490.8 738.6Z" fill="#f2ede2"/>
    <path d="M494.6 743.6 Q500 745 503.4 749 Q506.4 752 509.6 753.8 Q504 753.4 499.6 751.6 Q496.2 749.6 495.4 747 Z" fill="#e4ddd0"/>
    <path d="M496 748.6 Q501 751.2 509.6 753.8 Q503 754.2 498.4 751.6Z" fill="#5e3050"/>
    <path d="M481.6 737.8 Q486 735.4 491.4 735.2 L491.6 737.4 Q486.6 738 481.6 737.8Z" fill="#f4a81c"/>
    <circle cx="491.2" cy="735.6" r="0.8" fill="#2a2030"/>
    <path d="M492.6 751.4 L491.6 754 M496.4 751.8 L496 754.4" stroke="#b0603c" stroke-width="1.1"/>
    <!-- task view -->
    <rect x="542" y="733" width="18" height="16" rx="2" fill="#e9e9e9"/>
    <rect x="536" y="739" width="18" height="15.6" rx="2" fill="#5a5a5a" fill-opacity="0.85"/>
    <rect x="542" y="739" width="12" height="10" fill="#a8a8a8"/>
    <!-- teams -->
    <circle cx="596.6" cy="737.8" r="3.2" fill="#5059c9"/>
    <path d="M593 743 H603.8 V749 Q603.8 753 599.4 753 Q595 753 593 750Z" fill="#5059c9"/>
    <circle cx="589.6" cy="736.4" r="4.2" fill="#7b83eb"/>
    <path d="M583 741.4 H598 V750 Q598 755 590.6 755 Q583 755 583 748Z" fill="#7b83eb"/>
    <rect x="579.8" y="738.6" width="13.4" height="13.4" rx="1.4" fill="#4b53bc"/>
    <text x="586.5" y="749.6" font-family="Liberation Sans" font-size="10" font-weight="bold" fill="#fff" text-anchor="middle">T</text>
    <!-- mail -->
    <path d="M623.6 739.6 L635.9 732.5 L648.2 739.6 V755 H623.6Z" fill="#0a6bc8"/>
    <path d="M626 737.6 H645.8 V746 L635.9 750 L626 746Z" fill="#f4f4f4"/>
    <path d="M623.6 739.6 L635.9 747.6 L648.2 739.6 V755 H623.6Z" fill="#2ba6ee"/>
    <path d="M623.6 755 L635.9 745.6 L648.2 755Z" fill="#52c4f7"/>
    <!-- folder -->
    <path d="M667.5 735 Q667.5 733 669.5 733 H676 L678.6 735.4 H690 Q692 735.4 692 737.4 V754.2 H667.5Z" fill="#e6a712"/>
    <rect x="667.5" y="737.2" width="24.5" height="17" rx="1.2" fill="url(#fold)"/>
    <rect x="674" y="746.2" width="11.5" height="8" rx="1.5" fill="#1b7fd6"/>
    <rect x="676.6" y="748" width="6.4" height="1.2" fill="#0c5aa6"/>
    <rect x="677" y="760.6" width="5.8" height="1.8" rx="0.9" fill="#a9b0b5"/>
    <!-- word -->
    <rect x="718.8" y="733" width="17.2" height="21.2" rx="1.2" fill="#41a5ee"/>
    <rect x="718.8" y="738.3" width="17.2" height="5.3" fill="#2b7cd3"/>
    <rect x="718.8" y="743.6" width="17.2" height="5.3" fill="#185abd"/>
    <rect x="718.8" y="748.9" width="17.2" height="5.3" rx="1" fill="#103f91"/>
    <rect x="711.8" y="738" width="13" height="13" rx="1.2" fill="#185abd"/>
    <text x="718.3" y="748.6" font-family="Liberation Sans" font-size="10" font-weight="bold" fill="#fff" text-anchor="middle">W</text>
    <rect x="721" y="760.6" width="6" height="1.8" rx="0.9" fill="#a9b0b5"/>
    <!-- whatsapp -->
    <circle cx="767.9" cy="743.7" r="12" fill="#fafafa"/>
    <path d="M761.4 751 L762.6 747.2 A7 7 0 1 1 765 749.6 Z" stroke="#25d366" stroke-width="1.5" fill="none" stroke-linejoin="round"/>
    <path d="M765.2 740.6 Q765.4 744.6 770 746.6 L771.4 745.2 L769.8 744 L768.8 744.8 Q767.2 744 766.6 742.2 L767.4 741.4 L766.4 739.6Z" fill="#25d366"/>
    <circle cx="777.2" cy="735.2" r="8" fill="#1c1c1c"/>
    <text x="777.2" y="740" font-family="Liberation Sans" font-size="13" fill="#fff" text-anchor="middle">8</text>
    <rect x="764.8" y="760.6" width="6.4" height="1.8" rx="0.9" fill="#a9b0b5"/>
    <!-- chrome 1 -->
    <g transform="translate(812,743.7)">
      <circle r="12" fill="#dd4437"/>
      <path d="M0 0 L-10.4 -6 A12 12 0 0 0 -6 10.4Z" fill="#1da462"/>
      <path d="M0 0 L-6 10.4 A12 12 0 0 0 12 0 L10.4 -6Z" fill="#ffcd40"/>
      <path d="M0 0 L10.4 -6 A12 12 0 0 1 12 0Z" fill="#ffcd40"/>
      <circle r="5.6" fill="#fff"/><circle r="4.4" fill="#4c8bf5"/>
    </g>
    <circle cx="818.3" cy="737.5" r="6" fill="#3b6ea0"/><circle cx="818.3" cy="737.5" r="3.6" fill="#7aa04a"/>
    <rect x="809" y="760.6" width="5.8" height="1.8" rx="0.9" fill="#a9b0b5"/>
    <!-- excel -->
    <rect x="850" y="732.7" width="18.2" height="21.3" rx="1.2" fill="#21a366"/>
    <rect x="850" y="739.8" width="18.2" height="7.1" fill="#107c41"/>
    <rect x="850" y="746.9" width="18.2" height="7.1" rx="1" fill="#185c37"/>
    <rect x="859" y="732.7" width="9.2" height="7.1" fill="#33c481"/>
    <rect x="844" y="738" width="13" height="13" rx="1.2" fill="#107c41"/>
    <text x="850.5" y="748.6" font-family="Liberation Sans" font-size="10" font-weight="bold" fill="#fff" text-anchor="middle">X</text>
    <rect x="853" y="760.6" width="6" height="1.8" rx="0.9" fill="#a9b0b5"/>
    <!-- chrome 2 -->
    <g transform="translate(899.8,743.7)">
      <circle r="12" fill="#dd4437"/>
      <path d="M0 0 L-10.4 -6 A12 12 0 0 0 -6 10.4Z" fill="#1da462"/>
      <path d="M0 0 L-6 10.4 A12 12 0 0 0 12 0 L10.4 -6Z" fill="#ffcd40"/>
      <path d="M0 0 L10.4 -6 A12 12 0 0 1 12 0Z" fill="#ffcd40"/>
      <circle r="5.6" fill="#fff"/><circle r="4.4" fill="#4c8bf5"/>
    </g>
    <circle cx="909" cy="735.2" r="8.2" fill="#8a7560"/><circle cx="908" cy="734" r="4.5" fill="#b8a48c"/>
    <rect x="896.9" y="760.6" width="6" height="1.8" rx="0.9" fill="#a9b0b5"/>
    <!-- zoom active -->
    <rect x="958" y="725" width="5.8" height="38.6" rx="3" fill="#4a5866" fill-opacity="0.7"/>
    <rect x="924.4" y="724.3" width="34" height="39.4" rx="4" fill="#4e5e6c" stroke="#5d6b78" stroke-width="0.8"/>
    <circle cx="943.8" cy="743.7" r="12" fill="#0b5cff"/>
    <text x="943.8" y="747.6" font-family="Liberation Sans" font-size="11" font-weight="bold" fill="#fff" text-anchor="middle" letter-spacing="-0.5">zm</text>
    <rect x="936" y="760.2" width="15.6" height="2.6" rx="1.3" fill="#76d6e3"/>
    <!-- settings gear -->
    <g transform="translate(987.5,743.7)" fill="#0a0a0a">
      <circle r="9.4"/>
      <g id="teeth"><rect x="-3" y="-12" width="6" height="5" rx="1"/><rect x="-3" y="7" width="6" height="5" rx="1"/><rect x="-12" y="-3" width="5" height="6" rx="1"/><rect x="7" y="-3" width="5" height="6" rx="1"/></g>
      <g transform="rotate(45)"><rect x="-3" y="-12" width="6" height="5" rx="1"/><rect x="-3" y="7" width="6" height="5" rx="1"/><rect x="-12" y="-3" width="5" height="6" rx="1"/><rect x="7" y="-3" width="5" height="6" rx="1"/></g>
      <circle r="4.2" fill="#43515d"/>
    </g>
    <rect x="985" y="760.6" width="6" height="1.8" rx="0.9" fill="#a9b0b5"/>
    <!-- tray -->
    <path d="M1079 746.8 L1084.2 741.4 L1089.4 746.8" stroke="#fff" stroke-width="1.5" fill="none"/>
    <g stroke="#7fd3d4" stroke-width="1.4" fill="none" stroke-linecap="round">
      <rect x="1113.2" y="736.2" width="5.6" height="10" rx="2.8"/>
      <path d="M1110.6 743.6 Q1110.6 749 1116 749 Q1121.4 749 1121.4 743.6 M1116 749 V752"/>
    </g>
    <g stroke="#f2f2f2" stroke-width="1.3" fill="none">
      <path d="M1150 737.6 H1140.4 V748 H1154 V744"/>
      <path d="M1147 748 V751.6 M1143.6 751.6 H1150.4"/>
      <rect x="1152" y="736" width="4.4" height="6.2" rx="1"/>
      <path d="M1154.2 742.2 V752"/>
    </g>
    <g stroke="#f2f2f2" stroke-width="1.3" fill="none" stroke-linejoin="round">
      <path d="M1164.2 741 H1167.2 L1171.4 737.4 V749.8 L1167.2 746.2 H1164.2Z"/>
      <path d="M1174 740.6 Q1176 743.6 1174 746.6 M1176.6 738.6 Q1180 743.6 1176.6 748.6 M1179 737 Q1183 743.6 1179 750.2"/>
    </g>
    <g stroke="#f2f2f2" stroke-width="1.3" fill="none">
      <rect x="1188.6" y="740" width="13.4" height="8.6" rx="1.6"/>
      <path d="M1202.6 742.4 V746.2" stroke-width="1.6"/>
    </g>
    <path d="M1190 747.4 V741.6 L1194 736.4 L1193 741 L1196.6 741 L1192.6 747.6Z" fill="#f2f2f2"/>
    <!-- bell zz -->
    <path d="M1292 748.6 Q1294 746.6 1294 742.6 Q1294 738 1298.4 737.4 Q1302.8 738 1302.8 742.6 Q1302.8 746.6 1304.8 748.6Z" fill="#f2f2f2"/>
    <path d="M1296.6 750 Q1298.4 752 1300.2 750" stroke="#f2f2f2" stroke-width="1.4" fill="none"/>
    <path d="M1296 741.4 H1300 L1296 746 H1300" stroke="#3d4e5a" stroke-width="1.1" fill="none"/>
    <path d="M1302.4 736.4 H1305.6 L1302.4 739.8 H1305.6" stroke="#f2f2f2" stroke-width="1.1" fill="none"/>
    <!-- copilot pre -->
    <defs>
      <linearGradient id="copL" x1="0" y1="0" x2="0" y2="1"><stop offset="0" stop-color="#1a9cf2"/><stop offset="0.5" stop-color="#58bf6a"/><stop offset="1" stop-color="#e0c22a"/></linearGradient>
      <linearGradient id="copR" x1="0" y1="0" x2="1" y2="1"><stop offset="0" stop-color="#b24ae6"/><stop offset="0.6" stop-color="#ee5aa0"/><stop offset="1" stop-color="#f06a70"/></linearGradient>
    </defs>
    <path d="M1335 734 H1338.6 Q1340.4 734 1341.2 736 L1342.4 739 H1336Z" fill="#1060e0"/>
    <path d="M1328.6 734 H1336.6 Q1337.6 734 1337.4 735.4 L1335.4 747 Q1335 748.4 1333.4 748.4 H1325 Q1323.4 748.4 1323.6 746.8 L1326 736.4 Q1326.6 734 1328.6 734Z" fill="url(#copL)"/>
    <path d="M1338.6 739 H1344.6 Q1346 739 1345.8 740.6 L1344.2 748 Q1343.8 749.6 1342 749.6 H1335.6 Q1334.4 749.6 1334.6 748.2 L1336.4 740.8 Q1336.8 739 1338.6 739Z" fill="url(#copR)"/>
    <rect x="1328" y="749" width="17.8" height="7.2" rx="2" fill="#f9c30e"/>
    <text x="1336.9" y="755" font-family="Liberation Sans" font-size="6.6" font-weight="bold" fill="#1a1a1a" text-anchor="middle" letter-spacing="0.5">PRE</text>
  </svg>
  <div class="t" style="left:341px;top:18px;font-size:13.6px;letter-spacing:-0.1px;color:#5a5a5a">Search</div>
  <div class="t" style="left:1254px;top:11px;font-size:12px;color:#f4f4f4">11:14</div>
  <div class="t" style="left:1221px;top:27px;font-size:12px;color:#f4f4f4">21/08/2024</div>
</div>
</body></html>
